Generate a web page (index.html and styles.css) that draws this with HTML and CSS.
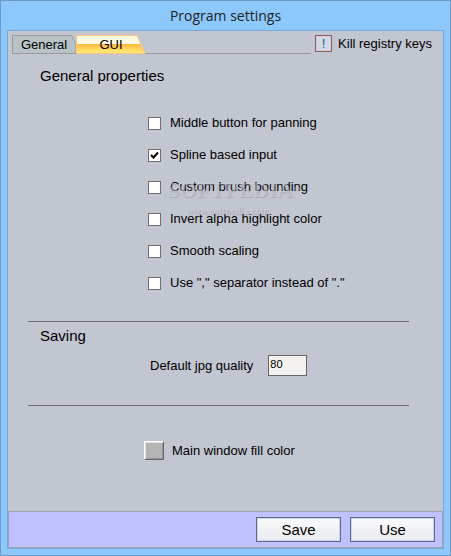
FILE: index.html
```html
<!DOCTYPE html>
<html lang="en">
<head>
  <meta charset="UTF-8">
  <meta name="viewport" content="width=device-width, initial-scale=1.0">
  <title>Program settings</title>
  <link rel="stylesheet" href="styles.css">
</head>
<body>
  <div class="window">
    <h1 class="title">Program settings</h1>

    <form class="client">
      <div class="top">
        <div class="tabs">
          <button type="button" class="tab general">
            <svg class="tab-bg" viewBox="0 0 65 19" preserveAspectRatio="none">
              <path d="M.5 18.500V.5H60.500L65 9V18.500Z" fill="#b8c3c5" stroke="#999" />
            </svg>
            <span>General</span>
          </button>
          <button type="button" class="tab gui">
            <svg class="tab-bg" viewBox="0 0 70 19" preserveAspectRatio="none">
              <defs>
                <linearGradient id="gold" x1="0" y1="0" x2="0" y2="1">
                  <stop offset="0" stop-color="#fffbd8" />
                  <stop offset=".46" stop-color="#fffbe8" />
                  <stop offset=".48" stop-color="#ffb93c" />
                  <stop offset="1" stop-color="#fff07a" />
                </linearGradient>
              </defs>
              <path d="M.5 18.500V.5H61L69 18.500Z" fill="url(#gold)" stroke="#ffc08a" />
            </svg>
            <span>GUI</span>
          </button>
        </div>
        <button type="button" class="kill" id="kill">!</button>
        <label class="kill-label" for="kill">Kill registry keys</label>
      </div>

      <div class="page">
        <h2 class="heading">General properties</h2>
        <div class="options">
          <label class="option"><input type="checkbox" class="check">Middle button for panning</label>
          <label class="option"><input type="checkbox" class="check" checked>Spline based input</label>
          <label class="option"><input type="checkbox" class="check">Custom brush bounding</label>
          <label class="option"><input type="checkbox" class="check">Invert alpha highlight color</label>
          <label class="option"><input type="checkbox" class="check">Smooth scaling</label>
          <label class="option"><input type="checkbox" class="check">Use "," separator instead of "."</label>
          <div class="watermark">
            <div class="mark-name">SOFTPEDIA<span class="tm">™</span></div>
            <div class="mark-url">www.softpedia.com</div>
          </div>
        </div>

        <div class="saving">
          <h2 class="heading">Saving</h2>
          <div class="quality">
            <label for="quality">Default jpg quality</label>
            <input type="text" class="number" id="quality" value="80">
          </div>
        </div>

        <div class="fill">
          <button type="button" class="swatch" id="fill"></button>
          <label for="fill">Main window fill color</label>
        </div>
      </div>

      <div class="footer">
        <button type="button" class="action">Save</button>
        <button type="button" class="action">Use</button>
      </div>
    </form>
  </div>
</body>
</html>
```

FILE: styles.css
```css
* {
  box-sizing: border-box;
}
body {
  margin: 0;
  font-family: "Liberation Sans", Arial, sans-serif;
  font-size: 13px;
  line-height: 16px;
  color: #000;
}
button, input {
  font-family: inherit;
  color: inherit;
  margin: 0;
  padding: 0;
}
.window {
  display: flex;
  flex-direction: column;
  min-height: 100vh;
  padding: 0 6px 6px;
  border: 1px solid #6c9bc6;
  background: #8cc8fc;
}
.title {
  margin: 0;
  font-family: "Open Sans", sans-serif;
  font-size: 14px;
  font-weight: normal;
  line-height: 29px;
  text-align: center;
  color: #222;
}
.client {
  flex: 1;
  display: flex;
  flex-direction: column;
  border: 1px solid #79a9d4;
  background: #c2c6d0;
}

/* tab strip */
.top {
  display: flex;
  padding: 4px 11px 0 4px;
}
.tabs {
  flex: 1;
  display: flex;
  height: 19px;
  margin-right: 4px;
  background: linear-gradient(#999, #999) bottom / 100% 1px no-repeat;
}
.tab {
  position: relative;
  height: 19px;
  border: 0;
  background: none;
  font-size: 13px;
  line-height: 19px;
}
.tab span {
  position: relative;
}
.general {
  width: 64px;
}
.gui {
  width: 70px;
}
.tab-bg {
  position: absolute;
  left: 0;
  top: 0;
  width: 100%;
  height: 100%;
}
.kill {
  width: 17px;
  height: 17px;
  border: 1px solid #75656c;
  background: #ccdcee;
  box-shadow: inset 0 0 0 1px #ffbcbc;
  font-size: 12px;
  line-height: 12px;
  color: #444;
}
.kill-label {
  margin-left: 6px;
  line-height: 17px;
}

/* settings page */
.page {
  flex: 1;
  padding: 13px 34px 0 20px;
}
.heading {
  margin: 0 0 0 12px;
  font-size: 15px;
  font-weight: normal;
  line-height: 18px;
}
.options {
  position: relative;
  display: flex;
  flex-direction: column;
  align-items: flex-start;
  gap: 16px;
  padding: 30px 0 30px 120px;
}
.option {
  display: flex;
  align-items: center;
  gap: 9px;
}
.check {
  appearance: none;
  width: 13px;
  height: 13px;
  border: 1px solid #707070;
  background: #fff;
}
.check:checked {
  background: #fff url("data:image/svg+xml,%3Csvg xmlns='http://www.w3.org/2000/svg' viewBox='0 0 11 11'%3E%3Cpath d='M2 5L4.500 7.500L9 2.500' fill='none' stroke='%23000' stroke-width='2'/%3E%3C/svg%3E") center / 11px 11px;
}
.watermark {
  position: absolute;
  left: 139px;
  top: 92px;
  pointer-events: none;
  color: rgba(218, 221, 230, .4);
  text-shadow: 1px 1px 1px rgba(130, 130, 140, .4);
}
.mark-name {
  font-family: "Liberation Serif", serif;
  font-size: 22px;
  font-weight: bold;
  line-height: 26px;
}
.tm {
  font-size: 8px;
  vertical-align: top;
}
.mark-url {
  padding-left: 19px;
  font-family: "Liberation Serif", serif;
  font-size: 10px;
  font-weight: bold;
}
.saving {
  padding: 5px 0 29px;
  border: solid #707070;
  border-width: 1px 0;
}
.quality {
  display: flex;
  align-items: center;
  gap: 15px;
  padding: 10px 0 0 122px;
}
.number {
  width: 39px;
  height: 21px;
  padding: 0 1px 3px;
  border: 1px solid #666;
  background: #f2f1ef;
  font-size: 11px;
}
.fill {
  display: flex;
  align-items: center;
  gap: 8px;
  padding: 35px 0 0 116px;
}
.swatch {
  width: 20px;
  height: 19px;
  border: 1px solid;
  border-color: #fff #666 #666 #fff;
  background: #b4b4b4;
  box-shadow: inset 1px 1px #e0e0e0, inset -1px -1px #999;
}

/* bottom buttons */
.footer {
  display: flex;
  justify-content: flex-end;
  gap: 9px;
  padding: 5px 7px;
  border: 1px solid #a0a2ac;
  background: #c0c0ff;
}
.action {
  width: 85px;
  height: 25px;
  border: 1px solid #666a78;
  background: linear-gradient(#fafbfc, #e8eaee);
  box-shadow: inset 0 0 0 1px #c4d4fa;
  font-size: 15px;
}
```
